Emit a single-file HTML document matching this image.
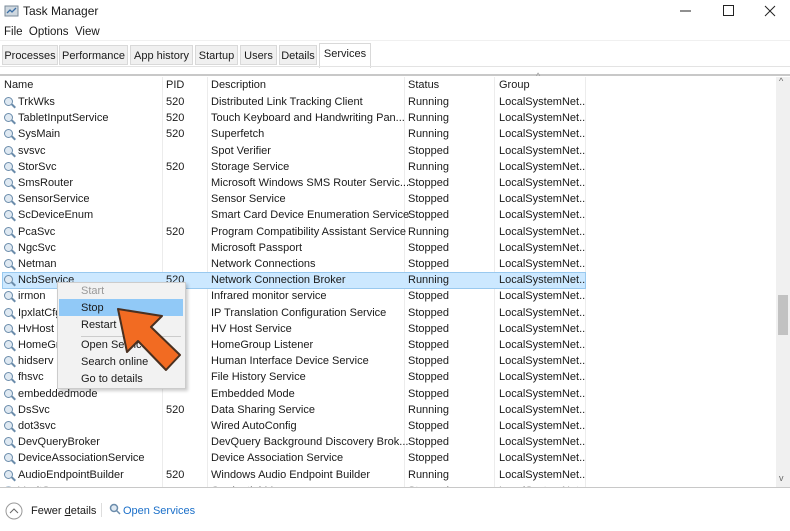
<!DOCTYPE html>
<html><head><style>
body{margin:0;width:790px;height:531px;background:#fff;font-family:"Liberation Sans",sans-serif;font-size:11px;color:#1a1a1a;position:relative;overflow:hidden}
.a{position:absolute;white-space:nowrap}
.tab{position:absolute;top:45px;height:20px;line-height:20px;background:#f0f0f0;border:1px solid #d9d9d9;text-align:center;font-size:11px;white-space:nowrap;box-sizing:border-box}
.row{position:absolute;left:0;width:585px;height:16px;line-height:16px;overflow:hidden}
.row span{position:absolute}
.ic{position:absolute;left:4px;top:3px;width:9px;height:9px;border:1.5px solid #6b8cab;border-radius:50%;background:#dfe9f2;box-sizing:border-box}
.ic:after{content:"";position:absolute;left:6px;top:7px;width:5px;height:2px;background:#6b8cab;transform:rotate(45deg)}
.vl{position:absolute;top:77px;width:1px;height:410px;background:#ececec}
.mi{position:absolute;left:81px;font-size:11px}
</style></head><body>
<svg class="a" style="left:4px;top:4px" width="16" height="14"><rect x="1" y="2" width="13" height="10" fill="#cfd8e0" stroke="#7a8a99"/><polyline points="3,9 6,6 8,8 12,4" fill="none" stroke="#3a6ea5" stroke-width="1.3"/></svg>
<div class="a" style="left:23px;top:4px;font-size:12px">Task Manager</div>
<svg class="a" style="left:680px;top:4px" width="100" height="14"><line x1="0" y1="7" x2="11" y2="7" stroke="#222"/><rect x="43.5" y="1.5" width="10" height="10" fill="none" stroke="#222"/><path d="M85 2 L95 12 M95 2 L85 12" stroke="#222"/></svg>
<div class="a" style="left:4px;top:26px;font-size:11.5px">File&nbsp; Options&nbsp; View</div>
<div class="a" style="left:0;top:40px;width:790px;height:1px;background:#f0f0f0"></div>
<div class="tab" style="left:2px;width:56px">Processes</div>
<div class="tab" style="left:59px;width:69px">Performance</div>
<div class="tab" style="left:130px;width:63px">App history</div>
<div class="tab" style="left:195px;width:43px">Startup</div>
<div class="tab" style="left:240px;width:37px">Users</div>
<div class="tab" style="left:279px;width:38px">Details</div>
<div class="a" style="left:319px;top:43px;width:52px;height:25px;background:#fff;border:1px solid #d9d9d9;border-bottom:none;line-height:20px;text-align:center;box-sizing:border-box">Services</div>
<div class="a" style="left:0;top:66px;width:790px;height:1px;background:#e3e3e3"></div>
<div class="a" style="left:0;top:74px;width:790px;height:2px;background:#c8c8c8"></div>
<div class="vl" style="left:162px"></div><div class="vl" style="left:207px"></div><div class="vl" style="left:404px"></div><div class="vl" style="left:494px"></div><div class="vl" style="left:585px"></div>
<div class="a" style="left:4px;top:79px">Name</div>
<div class="a" style="left:166px;top:79px">PID</div>
<div class="a" style="left:211px;top:79px">Description</div>
<div class="a" style="left:408px;top:79px">Status</div>
<div class="a" style="left:499px;top:79px">Group</div>
<div class="a" style="left:536px;top:71px;font-size:9px;color:#999">^</div>
<div class="a" style="left:2px;top:272px;width:582px;height:15px;background:#cce8ff;border:1px solid #99c9ef"></div>
<div id="rows"></div>
<script>
var d=[["TrkWks","520","Distributed Link Tracking Client","Running"],["TabletInputService","520","Touch Keyboard and Handwriting Pan...","Running"],["SysMain","520","Superfetch","Running"],["svsvc","","Spot Verifier","Stopped"],["StorSvc","520","Storage Service","Running"],["SmsRouter","","Microsoft Windows SMS Router Servic...","Stopped"],["SensorService","","Sensor Service","Stopped"],["ScDeviceEnum","","Smart Card Device Enumeration Service","Stopped"],["PcaSvc","520","Program Compatibility Assistant Service","Running"],["NgcSvc","","Microsoft Passport","Stopped"],["Netman","","Network Connections","Stopped"],["NcbService","520","Network Connection Broker","Running"],["irmon","","Infrared monitor service","Stopped"],["IpxlatCfgSvc","","IP Translation Configuration Service","Stopped"],["HvHost","","HV Host Service","Stopped"],["HomeGroupListener","","HomeGroup Listener","Stopped"],["hidserv","","Human Interface Device Service","Stopped"],["fhsvc","","File History Service","Stopped"],["embeddedmode","","Embedded Mode","Stopped"],["DsSvc","520","Data Sharing Service","Running"],["dot3svc","","Wired AutoConfig","Stopped"],["DevQueryBroker","","DevQuery Background Discovery Brok...","Stopped"],["DeviceAssociationService","","Device Association Service","Stopped"],["AudioEndpointBuilder","520","Windows Audio Endpoint Builder","Running"],["VaultSvc","","Credential Manager","Stopped"]];
var h="";d.forEach(function(r,i){var t=94+i*16.2;h+='<div class="row" style="top:'+t+'px;'+(i==24?'height:5px;opacity:.5':'')+'"><i class="ic"></i><span style="left:18px">'+r[0]+'</span><span style="left:166px">'+r[1]+'</span><span style="left:211px">'+r[2]+'</span><span style="left:408px">'+r[3]+'</span><span style="left:499px">LocalSystemNet...</span></div>';});
document.getElementById("rows").innerHTML=h;
</script>
<div class="a" style="left:776px;top:77px;width:14px;height:410px;background:#f0f0f0"></div>
<div class="a" style="left:778px;top:295px;width:10px;height:40px;background:#c2c2c2"></div>
<div class="a" style="left:779px;top:76px;font-size:9px;color:#666">^</div>
<div class="a" style="left:779px;top:473px;font-size:9px;color:#666">v</div>
<div class="a" style="left:0;top:487px;width:790px;height:1px;background:#c8c8c8"></div>
<div class="a" style="left:57px;top:282px;width:127px;height:105px;background:#f2f2f2;border:1px solid #ccc;box-shadow:2px 2px 3px rgba(0,0,0,.2)"></div>
<div class="a" style="left:59px;top:299px;width:124px;height:17px;background:#91c9f7"></div>
<div class="mi a" style="top:285px;color:#999">Start</div>
<div class="mi a" style="top:302px">Stop</div>
<div class="mi a" style="top:319px">Restart</div>
<div class="a" style="left:81px;top:336px;width:100px;height:1px;background:#ccc"></div>
<div class="mi a" style="top:339px">Open Services</div>
<div class="mi a" style="top:356px">Search online</div>
<div class="mi a" style="top:373px">Go to details</div>
<svg class="a" style="left:0;top:0" width="790" height="531"><polygon points="118,309 162,316 151,327 180,355 166,370 138,341 127,352" fill="#f26b22" stroke="#4a3020" stroke-width="2" stroke-linejoin="round"/></svg>
<svg class="a" style="left:5px;top:502px" width="18" height="18"><circle cx="9" cy="9" r="8" fill="none" stroke="#999"/><polyline points="5,11 9,7 13,11" fill="none" stroke="#666"/></svg>
<div class="a" style="left:31px;top:505px">Fewer <u>d</u>etails</div>
<div class="a" style="left:101px;top:503px;width:1px;height:14px;background:#ddd"></div>
<svg class="a" style="left:109px;top:503px" width="12" height="12"><circle cx="5" cy="5" r="3.5" fill="#dfe9f2" stroke="#6b8cab" stroke-width="1.5"/><line x1="7" y1="7" x2="11" y2="11" stroke="#6b8cab" stroke-width="1.5"/></svg>
<div class="a" style="left:123px;top:505px;color:#1a6fc9">Open Services</div>
</body></html>
